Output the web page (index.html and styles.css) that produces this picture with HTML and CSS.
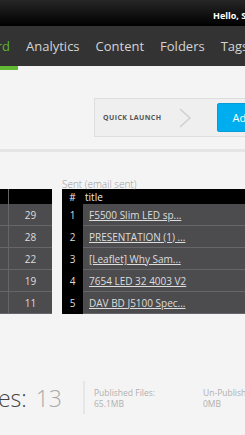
FILE: index.html
```html
<!DOCTYPE html>
<html lang="en">

<head>
    <meta charset="UTF-8">
    <meta name="viewport" content="width=device-width, initial-scale=1.0">
    <title>Dashboard</title>
    <link rel="stylesheet" href="styles.css">
</head>

<body>
    <div class="top-bar">
        <span class="hello">Hello, Sam</span>
    </div>
    <ul class="nav">
        <li class="nav-item nav-first active"><span>Dashboard</span></li>
        <li class="nav-item">Analytics</li>
        <li class="nav-item">Content</li>
        <li class="nav-item">Folders</li>
        <li class="nav-item">Tags</li>
    </ul>

    <div class="launch-area">
        <div class="quick-launch">
            <span class="quick-title">QUICK LAUNCH</span>
            <svg class="chevron" width="12" height="20" viewBox="0 0 12 20">
                <path d="M1 1 L11 10 L1 19" fill="none" stroke="#cfcfcf" stroke-width="1.5" />
            </svg>
            <a class="add-button" href="javascript:;">Add Content</a>
        </div>
    </div>

    <div class="tables">
        <!-- 左边被裁掉的表格 -->
        <div class="clip-left">
            <div class="table-box">
                <div class="table-label">Most viewed</div>
                <table class="data-table views-table">
                    <tr class="head-row"><th class="col-title">title</th><th class="col-count">views</th></tr>
                    <tr><td class="col-title"></td><td class="col-count">29</td></tr>
                    <tr><td class="col-title"></td><td class="col-count">28</td></tr>
                    <tr><td class="col-title"></td><td class="col-count">22</td></tr>
                    <tr><td class="col-title"></td><td class="col-count">19</td></tr>
                    <tr><td class="col-title"></td><td class="col-count">11</td></tr>
                </table>
            </div>
        </div>
        <div class="table-box sent-box">
            <div class="table-label">Sent (email sent)</div>
            <table class="data-table sent-table">
                <tr class="head-row"><th class="col-num">#</th><th class="col-name">title</th></tr>
                <tr><td class="col-num">1</td><td class="col-name"><a href="javascript:;">F5500 Slim LED sp...</a></td></tr>
                <tr><td class="col-num">2</td><td class="col-name"><a href="javascript:;">PRESENTATION (1) ...</a></td></tr>
                <tr><td class="col-num">3</td><td class="col-name"><a href="javascript:;">[Leaflet] Why Sam...</a></td></tr>
                <tr><td class="col-num">4</td><td class="col-name"><a href="javascript:;">7654 LED 32 4003 V2</a></td></tr>
                <tr><td class="col-num">5</td><td class="col-name"><a href="javascript:;">DAV BD J5100 Spec...</a></td></tr>
            </table>
        </div>
    </div>

    <div class="stats">
        <div class="stat-total">
            <span>Total Files: <span class="stat-num">13</span></span>
        </div>
        <div class="stat-item">
            <div>Published Files:</div>
            <div>65.1MB</div>
        </div>
        <div class="stat-item">
            <div>Un-Published Files:</div>
            <div>0MB</div>
        </div>
    </div>
</body>

</html>
```

FILE: styles.css
```css
body,
ul,
li,
div,
table,
td,
th {
    margin: 0px;
    padding: 0px;
}

body {
    width: 245px;
    overflow: hidden;
    background: #f4f4f4;
    font-family: "Open Sans", "Liberation Sans", sans-serif;
    color: #333;
}

a {
    color: inherit;
}

.top-bar {
    height: 26px;
    background: linear-gradient(#262626, #000000);
    padding-left: 213px;
    line-height: 26px;
    white-space: nowrap;
    overflow: hidden;
}

.hello {
    color: #ffffff;
    font-size: 9px;
    font-weight: bold;
}

.nav {
    list-style: none;
    display: flex;
    height: 44px;
    background: linear-gradient(#333333 40px, #f4f4f4 40px);
    white-space: nowrap;
    overflow: hidden;
}

.nav-item {
    flex-shrink: 0;
    height: 40px;
    line-height: 40px;
    padding: 0px 8px;
    font-size: 13px;
    color: #d4d4d4;
    border-bottom: 4px solid transparent;
}

.nav-first {
    width: 10px;
    padding-left: 0px;
    display: flex;
    justify-content: flex-end;
    overflow: hidden;
    box-sizing: content-box;
}

.nav-first span {
    flex-shrink: 0;
}

.nav-item.active {
    color: #5cb531;
    border-bottom-color: #62bb33;
}

.launch-area {
    padding: 28px 0px 12px 94px;
    border-bottom: 3px solid #e5e5e5;
}

.quick-launch {
    display: flex;
    align-items: center;
    height: 37px;
    width: 300px;
    border: 1px solid #dedede;
    background: #efefef;
    padding-left: 8px;
    white-space: nowrap;
}

.quick-launch > * {
    flex-shrink: 0;
}

.quick-title {
    font-size: 7px;
    font-weight: bold;
    letter-spacing: 0.4px;
    color: #555;
}

.chevron {
    margin-left: 17px;
}

.add-button {
    margin-left: 26px;
    height: 27px;
    line-height: 27px;
    padding: 0px 15px;
    background: #00aeef;
    border: 1px solid #0a9bd6;
    border-radius: 2px;
    color: #ffffff;
    font-size: 11px;
    text-decoration: none;
}

.tables {
    display: flex;
    padding-top: 27px;
    white-space: nowrap;
}

.clip-left {
    width: 52px;
    display: flex;
    justify-content: flex-end;
    overflow: hidden;
    flex-shrink: 0;
}

.table-box {
    flex-shrink: 0;
}

.sent-box {
    margin-left: 10px;
}

.table-label {
    height: 10px;
    line-height: 10px;
    font-size: 10px;
    color: #9a9a9a;
    font-weight: 300;
}

.data-table {
    border-collapse: collapse;
    font-size: 10px;
    color: #dddddd;
}

.data-table .head-row th {
    height: 15px;
    background: #000000;
    color: #eeeeee;
    font-size: 10px;
    font-weight: normal;
    text-align: left;
}

.data-table td {
    height: 21px;
    background: #4c4c4f;
    border-bottom: 1px solid #66666a;
}

.views-table .col-title {
    width: 150px;
    border-right: 1px solid #66666a;
}

.views-table .col-count {
    width: 43px;
    text-align: center;
}

.views-table .head-row th {
    color: #000000;
}

.sent-table .col-num {
    width: 21px;
    text-align: center;
    background: #000000;
    border-bottom-color: #000000;
}

.sent-table .head-row .col-num {
    text-align: center;
}

.sent-table .col-name {
    width: 200px;
    padding-left: 6px;
}

.sent-table .head-row .col-name {
    padding-left: 2px;
}

.stats {
    display: flex;
    align-items: center;
    margin-top: 67px;
    height: 33px;
    white-space: nowrap;
}

.stat-total {
    width: 62px;
    display: flex;
    justify-content: flex-end;
    overflow: hidden;
    flex-shrink: 0;
    font-size: 23px;
    font-weight: 300;
    color: #444;
    margin-right: 21px;
}

.stat-total > span {
    flex-shrink: 0;
}

.stat-num {
    color: #aaaaaa;
    margin-left: 3px;
}

.stat-item {
    height: 33px;
    width: 98px;
    flex-shrink: 0;
    padding-left: 9px;
    border-left: 2px solid #e6e6e6;
    font-size: 8.5px;
    color: #b0b0b0;
    display: flex;
    flex-direction: column;
    justify-content: center;
}

.stat-item + .stat-item {
    border-left-color: transparent;
}
```
